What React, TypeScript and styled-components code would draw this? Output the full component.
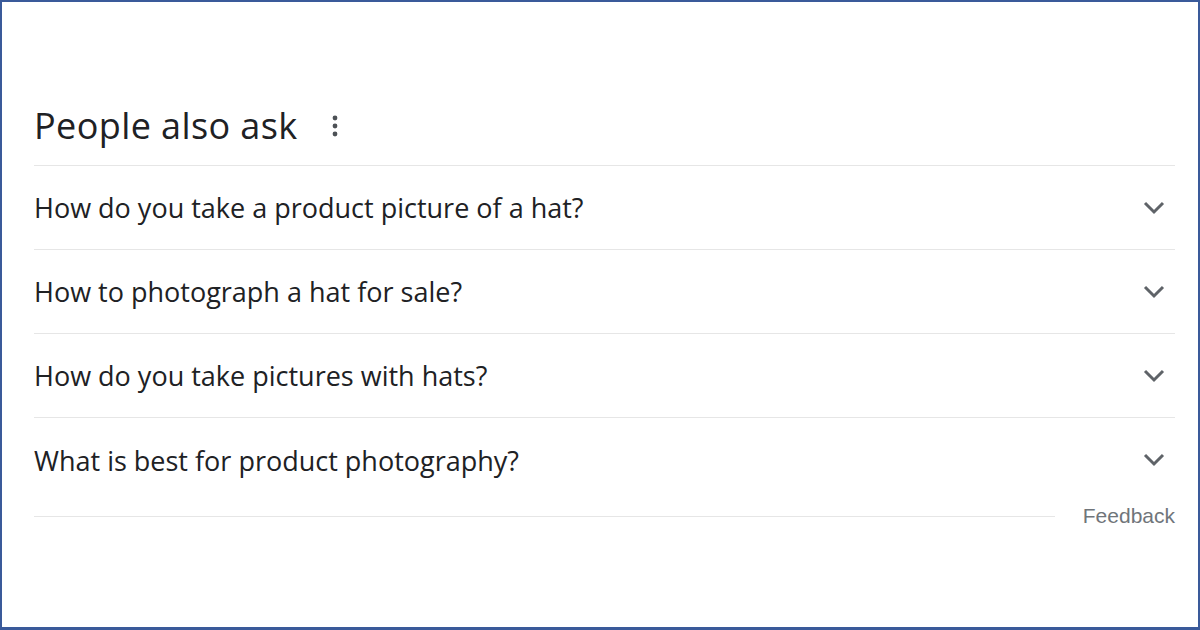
import React from "react";
import styled, { createGlobalStyle } from "styled-components";

const Global = createGlobalStyle`
  html, body { margin: 0; padding: 0; background: #ffffff; }
  * { box-sizing: border-box; }
`;

const Frame = styled.div`
  width: 1200px;
  height: 630px;
  border: 2px solid #3a5a9a;
  border-bottom-width: 3px;
  background: #ffffff;
  padding: 104px 23px 0 32px;
  font-family: "Open Sans", "Noto Sans", sans-serif;
`;

const Header = styled.div`
  height: 60px;
  display: flex;
  align-items: flex-end;
  gap: 27px;
  padding-bottom: 15px;
  border-bottom: 1px solid #e6e6e6;
`;

const Title = styled.h2`
  margin: 0;
  font-weight: 400;
  font-size: 36px;
  line-height: 49px;
  color: #202124;
  letter-spacing: 0.4px;
`;

const MoreButton = styled.div`
  display: flex;
  align-items: center;
  justify-content: center;
  width: 20px;
  height: 28px;
  margin-bottom: 10px;
`;

const Row = styled.div<{ $last?: boolean }>`
  height: 84px;
  display: flex;
  align-items: center;
  justify-content: space-between;
  border-bottom: ${(p) => (p.$last ? "none" : "1px solid #e6e6e6")};
`;

const Question = styled.span`
  font-size: 27px;
  color: #202124;
  letter-spacing: 0;
`;

const ChevronBox = styled.div`
  width: 24px;
  display: flex;
  justify-content: center;
  margin-right: 9px;
`;

const Footer = styled.div`
  height: 28px;
  display: flex;
  align-items: center;
  gap: 28px;
`;

const FooterLine = styled.div`
  flex: 1;
  height: 1px;
  background: #e6e6e6;
`;

const Feedback = styled.span`
  font-family: "Liberation Sans", Arial, sans-serif;
  font-size: 21px;
  color: #70757a;
`;

const questions = [
  "How do you take a product picture of a hat?",
  "How to photograph a hat for sale?",
  "How do you take pictures with hats?",
  "What is best for product photography?",
];

const Dots = () => (
  <svg width="6" height="22" viewBox="0 0 6 22">
    <circle cx="3" cy="3" r="2.4" fill="#4d5156" />
    <circle cx="3" cy="11" r="2.4" fill="#4d5156" />
    <circle cx="3" cy="19" r="2.4" fill="#4d5156" />
  </svg>
);

const Chevron = () => (
  <svg width="22" height="14" viewBox="0 0 22 14">
    <path d="M2 2 L11 11 L20 2" fill="none" stroke="#5f6368" strokeWidth="3" />
  </svg>
);

export default function App() {
  return (
    <>
      <Global />
      <Frame>
        <Header>
          <Title>People also ask</Title>
          <MoreButton>
            <Dots />
          </MoreButton>
        </Header>
        {questions.map((q, i) => (
          <Row key={q} $last={i === questions.length - 1}>
            <Question>{q}</Question>
            <ChevronBox>
              <Chevron />
            </ChevronBox>
          </Row>
        ))}
        <Footer>
          <FooterLine />
          <Feedback>Feedback</Feedback>
        </Footer>
      </Frame>
    </>
  );
}
